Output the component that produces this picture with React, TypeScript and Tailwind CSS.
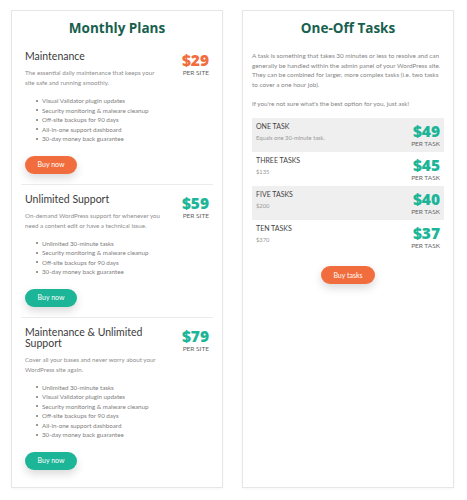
type Plan = {
  name: string;
  price: string;
  description: string;
  features: string[];
  accent: "orange" | "teal";
};

type TaskRow = {
  title: string;
  sub: string;
  price: string;
};

const plans: Plan[] = [
  {
    name: "Maintenance",
    price: "$29",
    description: "The essential daily maintenance that keeps your site safe and running smoothly.",
    features: [
      "Visual Validator plugin updates",
      "Security monitoring & malware cleanup",
      "Off-site backups for 90 days",
      "All-in-one support dashboard",
      "30-day money back guarantee"
    ],
    accent: "orange"
  },
  {
    name: "Unlimited Support",
    price: "$59",
    description: "On-demand WordPress support for whenever you need a content edit or have a technical issue.",
    features: [
      "Unlimited 30-minute tasks",
      "Security monitoring & malware cleanup",
      "Off-site backups for 90 days",
      "30-day money back guarantee"
    ],
    accent: "teal"
  },
  {
    name: "Maintenance & Unlimited Support",
    price: "$79",
    description: "Cover all your bases and never worry about your WordPress site again.",
    features: [
      "Unlimited 30-minute tasks",
      "Visual Validator plugin updates",
      "Security monitoring & malware cleanup",
      "Off-site backups for 90 days",
      "All-in-one support dashboard",
      "30-day money back guarantee"
    ],
    accent: "teal"
  }
];

const tasks: TaskRow[] = [
  { title: "ONE TASK", sub: "Equals one 30-minute task.", price: "$49" },
  { title: "THREE TASKS", sub: "$135", price: "$45" },
  { title: "FIVE TASKS", sub: "$200", price: "$40" },
  { title: "TEN TASKS", sub: "$370", price: "$37" }
];

const heading = { fontFamily: "'Open Sans', 'DejaVu Sans', sans-serif" };
const body = { fontFamily: "Lato, 'Open Sans', sans-serif" };

function PlanBlock({ plan, last }: { plan: Plan; last: boolean }) {
  return (
    <div className={last ? "mx-[9px] px-[4px] pt-[9px]" : "mx-[9px] border-b border-[#ececec] px-[4px] pb-[10px] pt-[9px]"}>
      <div className="flex items-start justify-between">
        <div className="w-[150px]">
          <h3 className="text-[10.5px] leading-[11px] text-[#3b3b3b]">{plan.name}</h3>
          <p className="mt-[6px] w-[140px] text-[6.2px] leading-[10px] text-[#8d8d8d]">{plan.description}</p>
        </div>
        <div className="flex flex-col items-end pt-[1px]">
          <span
            style={heading}
            className={
              plan.accent === "orange"
                ? "text-[15.5px] font-extrabold leading-[17px] text-[#f26d3d]"
                : "text-[15.5px] font-extrabold leading-[17px] text-[#1db598]"
            }
          >
            {plan.price}
          </span>
          <span className="text-[6.5px] leading-[8px] text-[#666]">PER SITE</span>
        </div>
      </div>
      <ul className="mt-[8px] pl-[11px] text-[6.2px] leading-[9.5px] text-[#7d7d7d]">
        {plan.features.map((f) => (
          <li key={f} className="flex items-center gap-[4px]">
            <span className="h-[2px] w-[2px] rounded-full bg-[#777]" />
            {f}
          </li>
        ))}
      </ul>
      <button
        className={
          plan.accent === "orange"
            ? "mt-[12px] h-[18px] w-[52px] rounded-full bg-[#f26d3d] text-[7px] text-white shadow-[0_4px_8px_rgba(0,0,0,0.15)]"
            : "mt-[12px] h-[18px] w-[52px] rounded-full bg-[#1db598] text-[7px] text-white shadow-[0_4px_8px_rgba(0,0,0,0.15)]"
        }
      >
        Buy now
      </button>
    </div>
  );
}

export default function App() {
  return (
    <div style={body} className="flex h-[500px] w-[467px] gap-[19px] bg-white pl-[11px] pt-[10px]">
      <section className="h-[478px] w-[212px] border border-[#e6e6e6] bg-white shadow-[0_1px_3px_rgba(0,0,0,0.04)]">
        <h2 style={heading} className="pt-[9px] text-center text-[13.5px] font-bold leading-[17px] text-[#17604e]">
          Monthly Plans
        </h2>
        <div className="mt-[5px]">
          {plans.map((p, i) => (
            <PlanBlock key={p.name} plan={p} last={i === plans.length - 1} />
          ))}
        </div>
      </section>

      <section className="h-[478px] w-[212px] border border-[#e6e6e6] bg-white px-[9px] shadow-[0_1px_3px_rgba(0,0,0,0.04)]">
        <h2 style={heading} className="pt-[9px] text-center text-[13.5px] font-bold leading-[17px] text-[#17604e]">
          One-Off Tasks
        </h2>
        <div className="mt-[14px] text-[6.35px] leading-[9.5px] text-[#858585]">
          <p>
            A task is something that takes 30 minutes or less to resolve and can generally be handled within the admin
            panel of your WordPress site. They can be combined for larger, more complex tasks (i.e. two tasks
            <br />
            to cover a one hour job).
          </p>
          <p className="mt-[9.5px]">If you&apos;re not sure what&apos;s the best option for you, just ask!</p>
        </div>
        <div className="mt-[10px]">
          {tasks.map((t, i) => (
            <div
              key={t.title}
              className={
                i % 2 === 0
                  ? "flex h-[34px] items-start justify-between bg-[#efefef] px-[4px] pt-[3px]"
                  : "flex h-[34px] items-start justify-between bg-white px-[4px] pt-[3px]"
              }
            >
              <div>
                <div className="text-[7px] leading-[10px] text-[#444]">{t.title}</div>
                <div className="mt-[3px] text-[5.8px] leading-[8px] text-[#999]">{t.sub}</div>
              </div>
              <div className="flex flex-col items-end pt-[2px]">
                <span style={heading} className="text-[15.5px] font-extrabold leading-[17px] text-[#1db598]">
                  {t.price}
                </span>
                <span className="text-[6.5px] leading-[8px] text-[#666]">PER TASK</span>
              </div>
            </div>
          ))}
        </div>
        <div className="mt-[12px] flex justify-center">
          <button className="h-[18px] w-[54px] rounded-full bg-[#f26d3d] text-[7px] text-white shadow-[0_4px_8px_rgba(0,0,0,0.15)]">
            Buy tasks
          </button>
        </div>
      </section>
    </div>
  );
}
